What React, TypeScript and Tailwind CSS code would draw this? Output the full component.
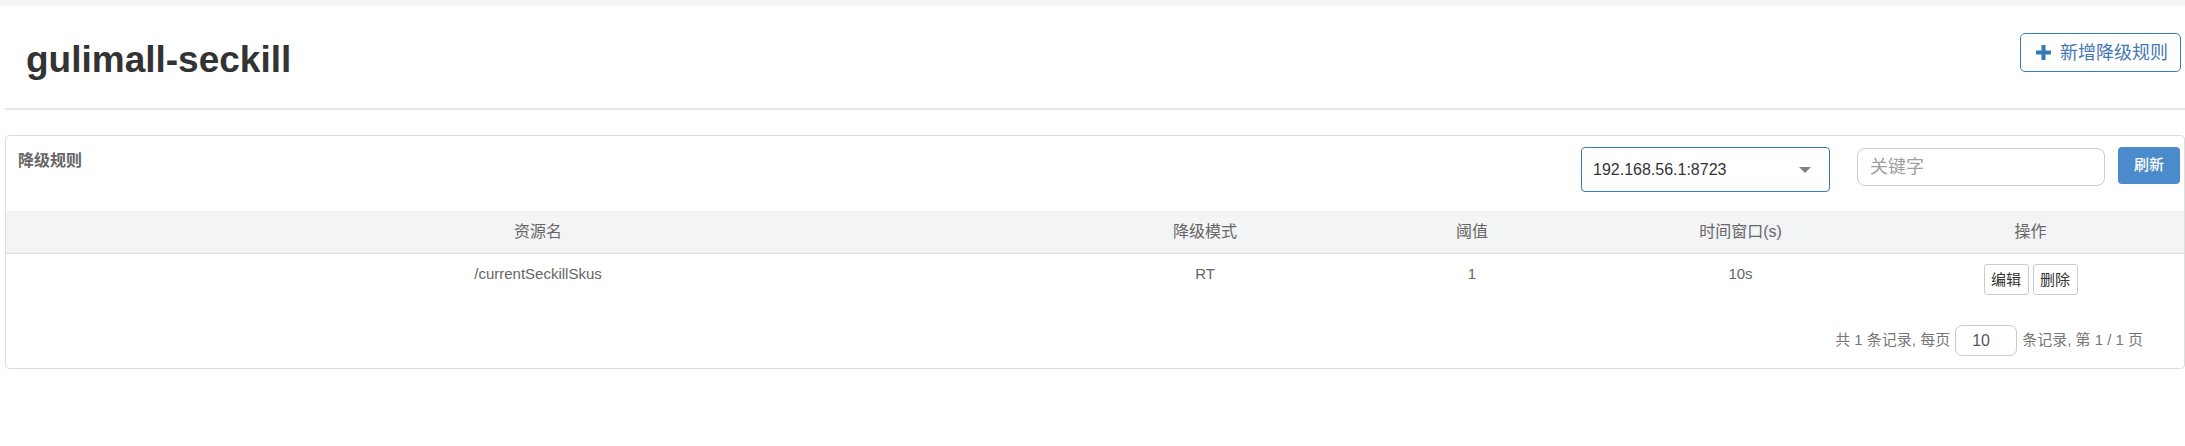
import React from "react";

const FONT = '"Liberation Sans", Arial, "Noto Sans CJK SC", sans-serif';

function PlusIcon() {
  return (
    <svg width="15" height="15" viewBox="0 0 15 15" className="shrink-0">
      <rect x="5.5" y="0" width="4" height="15" fill="#337ab7" />
      <rect x="0" y="5.5" width="15" height="4" fill="#337ab7" />
    </svg>
  );
}

export default function App() {
  const cols = "grid grid-cols-[1064px_270px_264px_273px_1fr]";
  return (
    <div className="w-[2185px] min-h-[446px] bg-white" style={{ fontFamily: FONT }}>
      <div className="h-[6px] bg-[#f6f6f6]" />
      {/* page header */}
      <div className="flex justify-between h-[102px]">
        <div className="ml-[26px] mt-[35px] text-[37px] leading-[37px] font-bold text-[#333]">
          gulimall-seckill
        </div>
        <div className="mt-[27px] mr-[4px]">
          <button className="flex items-center w-[161px] h-[39px] pl-[15px] border border-[#3a7bbf] rounded-[5px] bg-white">
            <PlusIcon />
            <span className="ml-[9px] text-[18px] leading-[20px] text-[#4576b3]">新增降级规则</span>
          </button>
        </div>
      </div>
      <div className="ml-[5px] h-[2px] bg-[#e5e5e5]" />

      {/* panel */}
      <div className="ml-[5px] mt-[25px] border border-[#dddddd] rounded-[4px]">
        <div className="flex justify-between h-[75px]">
          <div className="ml-[12px] pt-[14px] text-[16px] leading-[22px] font-bold text-[#666]">降级规则</div>
          <div className="flex items-start mr-[4px]">
            <div className="mt-[11px] relative flex items-center w-[249px] h-[45px] border border-[#3d79b8] rounded-[4px] pl-[11px] bg-white">
              <span className="text-[16px] text-[#333]">192.168.56.1:8723</span>
              <svg width="12" height="6" viewBox="0 0 12 6" className="absolute left-[217px] top-[19px]">
                <polygon points="0,0 12,0 6,6" fill="#808080" />
              </svg>
            </div>
            <div className="mt-[12px] ml-[27px] flex items-center w-[248px] h-[38px] border border-[#cccccc] rounded-[8px] pl-[12px] bg-white">
              <span className="text-[18px] text-[#a0a0a0]">关键字</span>
            </div>
            <button className="mt-[11px] ml-[13px] w-[62px] h-[37px] rounded-[4px] bg-[#4b8acb] text-white text-[15px] font-medium flex items-center justify-center">
              刷新
            </button>
          </div>
        </div>

        {/* table header */}
        <div className={`${cols} h-[43px] bg-[#f3f4f5] border-b border-[#dddddd] text-[16px] text-[#666]`}>
          <div className="flex items-center justify-center">资源名</div>
          <div className="flex items-center justify-center">降级模式</div>
          <div className="flex items-center justify-center">阈值</div>
          <div className="flex items-center justify-center">时间窗口(s)</div>
          <div className="flex items-center justify-center">操作</div>
        </div>

        {/* row */}
        <div className={`${cols} pt-[10px] pb-[10px] text-[15px] leading-[20px] text-[#666]`}>
          <div className="text-center">/currentSeckillSkus</div>
          <div className="text-center">RT</div>
          <div className="text-center">1</div>
          <div className="text-center">10s</div>
          <div className="flex justify-center gap-[4px]">
            <button className="w-[45px] h-[31px] border border-[#cccccc] rounded-[3px] bg-white text-[15px] text-[#333] flex items-center justify-center">编辑</button>
            <button className="w-[45px] h-[31px] border border-[#cccccc] rounded-[3px] bg-white text-[15px] text-[#333] flex items-center justify-center">删除</button>
          </div>
        </div>

        {/* pagination */}
        <div className="flex justify-end items-center pt-[20px] pb-[12px] pr-[41px] text-[15px] text-[#777]">
          <span>共 1 条记录, 每页</span>
          <div className="mx-[5px] w-[62px] h-[31px] border border-[#cccccc] rounded-[7px] flex items-center pl-[16px] text-[16px] text-[#555]">
            10
          </div>
          <span>条记录, 第 1 / 1 页</span>
        </div>
      </div>
    </div>
  );
}
